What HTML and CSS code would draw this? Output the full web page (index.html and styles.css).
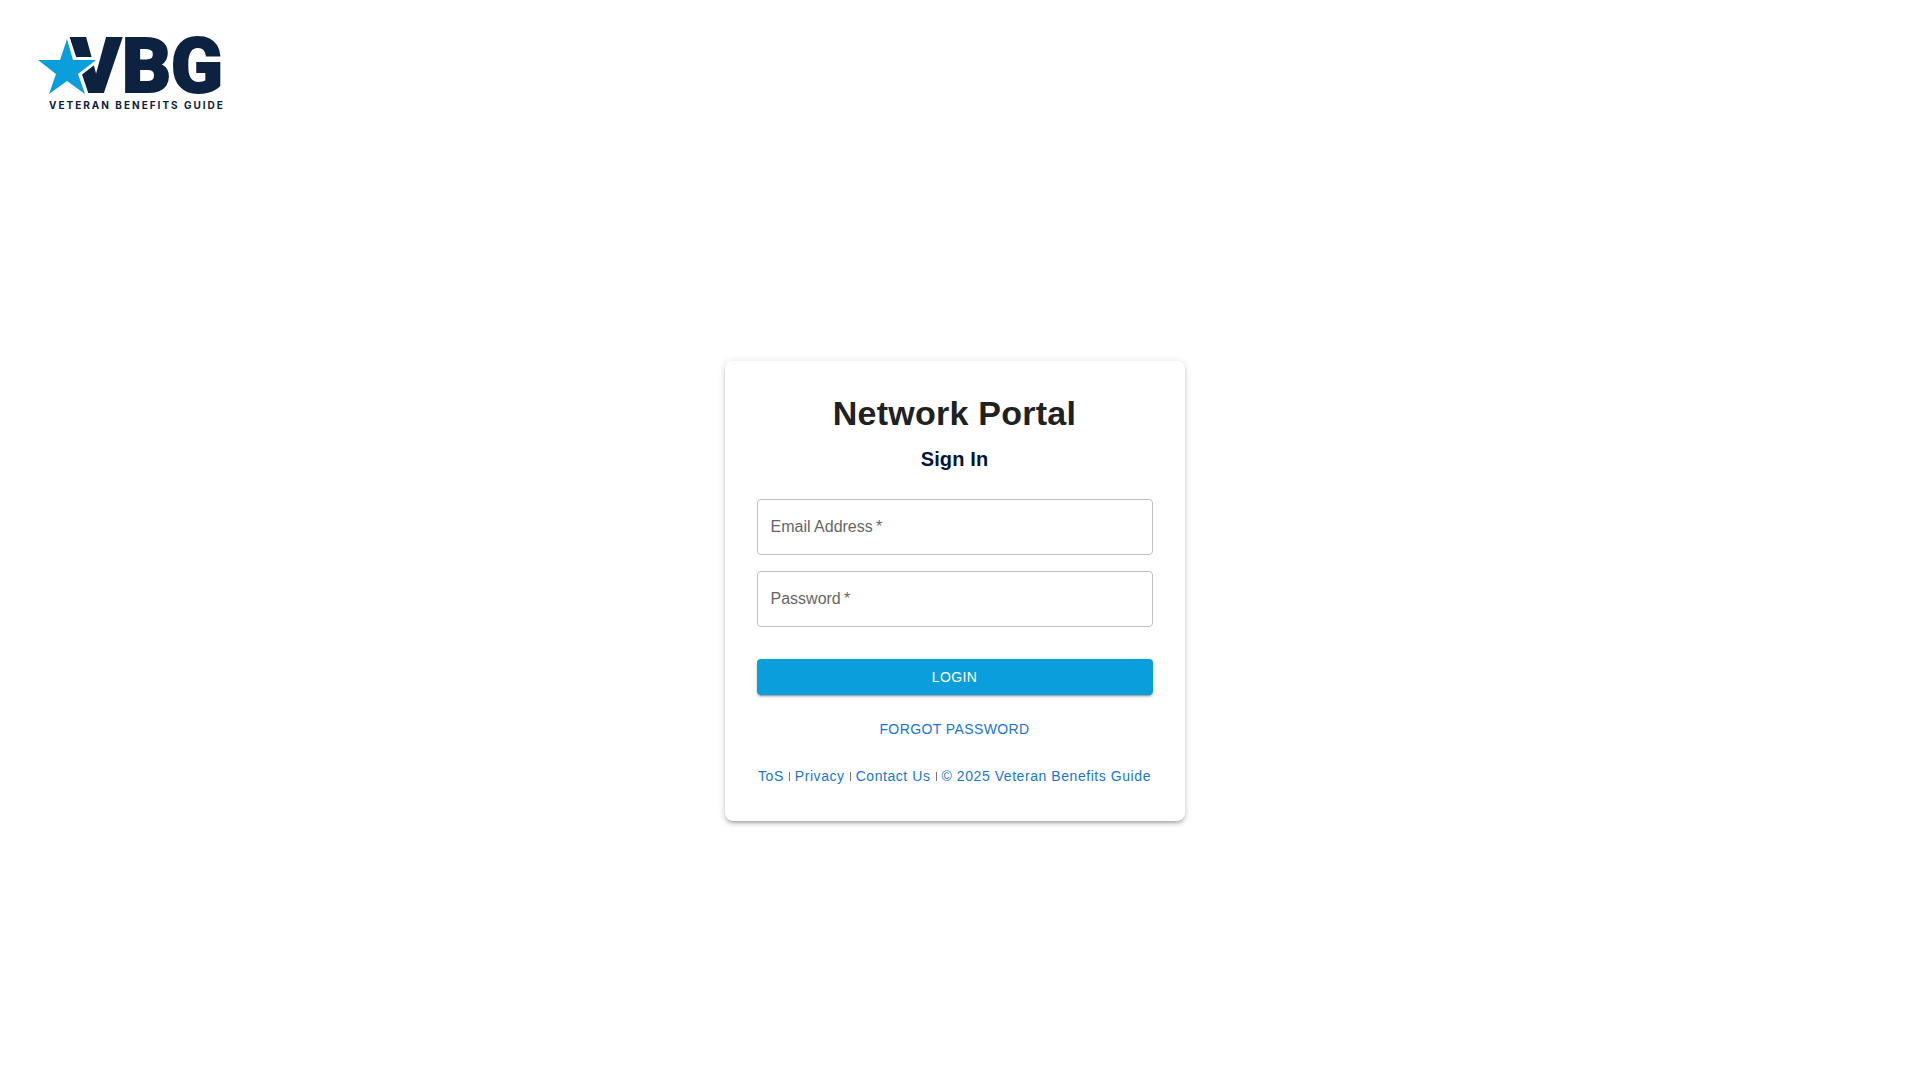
FILE: index.html
```html
<!DOCTYPE html>
<html lang="en">
<head>
  <meta charset="UTF-8" />
  <meta name="viewport" content="width=device-width, initial-scale=1.0"/>
  <title>Network Portal</title>
  <link rel="stylesheet" href="styles.css">
</head>
<body>
  <header class="header">
    <svg class="logo" viewBox="32 32 192 78" role="img" aria-label="Veteran Benefits Guide">
      <text class="logo-name" y="92" x="71 122 171">VBG</text>
      <polygon class="logo-star" points="67,39 73,60 96,60 78,74 85,94 67,81 49,94 56,74 38,60 60,60"/>
      <text class="logo-tagline" x="49" y="109">VETERAN BENEFITS GUIDE</text>
    </svg>
  </header>

  <main class="main">
    <div class="card">
      <h1 class="title">Network Portal</h1>
      <h2 class="subtitle">Sign In</h2>

      <form class="form">
        <div class="field">
          <input type="email" id="email" placeholder=" " required>
          <label for="email">Email Address&thinsp;*</label>
        </div>
        <div class="field">
          <input type="password" id="password" placeholder=" " required>
          <label for="password">Password&thinsp;*</label>
        </div>
        <button type="submit" class="login">LOGIN</button>
      </form>

      <a href="#" class="forgot">FORGOT PASSWORD</a>

      <footer class="links">
        <a href="#">ToS</a>
        <span class="divider"></span>
        <a href="#">Privacy</a>
        <span class="divider"></span>
        <a href="#">Contact Us</a>
        <span class="divider"></span>
        <a href="#">© 2025 Veteran Benefits Guide</a>
      </footer>
    </div>
  </main>
</body>
</html>
```
FILE: styles.css
```css
:root {
  --navy: #0c2240;
  --sky: #0a9edc;
  --link: #1976d2;
}

* {
  margin: 0;
  padding: 0;
  box-sizing: border-box;
}

body {
  font-family: "Liberation Sans", Helvetica, Arial, sans-serif;
  min-height: 100vh;
  display: flex;
  flex-direction: column;
  background: #fff;
  color: #212121;
}

.header {
  padding: 32px 32px 0;
}

.logo {
  display: block;
  width: 192px;
  overflow: visible;
}

.logo-name {
  font-family: Roboto, sans-serif;
  font-size: 76px;
  font-weight: 900;
  fill: var(--navy);
  stroke: var(--navy);
  stroke-width: 2px;
}

.logo-star {
  fill: var(--sky);
  stroke: #fff;
  stroke-width: 6px;
  stroke-linejoin: round;
  paint-order: stroke;
}

.logo-tagline {
  font-family: Inter, sans-serif;
  font-size: 10px;
  font-weight: 700;
  letter-spacing: 2px;
  fill: var(--navy);
}

.main {
  flex: 1;
  display: flex;
  justify-content: center;
  align-items: center;
}

.card {
  width: 100%;
  max-width: 460px;
  padding: 32px;
  display: flex;
  flex-direction: column;
  border-radius: 8px;
  box-shadow: 0 3px 3px -2px rgba(0, 0, 0, 0.2), 0 3px 4px rgba(0, 0, 0, 0.14), 0 1px 8px rgba(0, 0, 0, 0.12);
}

.title {
  font-size: 34px;
  line-height: 40px;
  letter-spacing: 0.00735em;
  text-align: center;
}

.subtitle {
  margin: 10px 0 24px;
  font-size: 20px;
  line-height: 32px;
  letter-spacing: 0.0075em;
  text-align: center;
  color: #001639;
}

.form {
  display: flex;
  flex-direction: column;
  gap: 16px;
}

.field {
  position: relative;
}

.field input {
  display: block;
  width: 100%;
  height: 56px;
  padding: 0 14px;
  font: inherit;
  font-size: 16px;
  border: 1px solid #c0c0c0;
  border-radius: 4px;
  background: transparent;
}

/* label sits inside the empty input */
.field label {
  position: absolute;
  top: 16px;
  left: 14px;
  font-size: 16px;
  line-height: 23px;
  color: #666;
  pointer-events: none;
}

.field input:focus + label,
.field input:not(:placeholder-shown) + label {
  top: -10px;
  padding: 0 4px;
  font-size: 12px;
  background: #fff;
}

.login {
  height: 36px;
  margin-top: 16px;
  font: inherit;
  font-size: 14px;
  letter-spacing: 0.02857em;
  color: #fff;
  background: var(--sky);
  border: none;
  border-radius: 4px;
  box-shadow: 0 3px 1px -2px rgba(0, 0, 0, 0.2), 0 2px 2px rgba(0, 0, 0, 0.14), 0 1px 5px rgba(0, 0, 0, 0.12);
  cursor: pointer;
}

.forgot {
  margin: 16px 0;
  font-size: 14px;
  line-height: 36px;
  letter-spacing: 0.02857em;
  text-align: center;
  color: var(--link);
  text-decoration: none;
}

.links {
  display: flex;
  justify-content: center;
  align-items: center;
  gap: 5px;
  font-size: 14px;
  line-height: 26px;
  letter-spacing: 0.04em;
  white-space: nowrap;
}

.links a {
  color: var(--link);
  text-decoration: none;
}

.divider {
  width: 1px;
  height: 9px;
  background: #777;
}

.forgot:hover,
.links a:hover {
  text-decoration: underline;
}
```
